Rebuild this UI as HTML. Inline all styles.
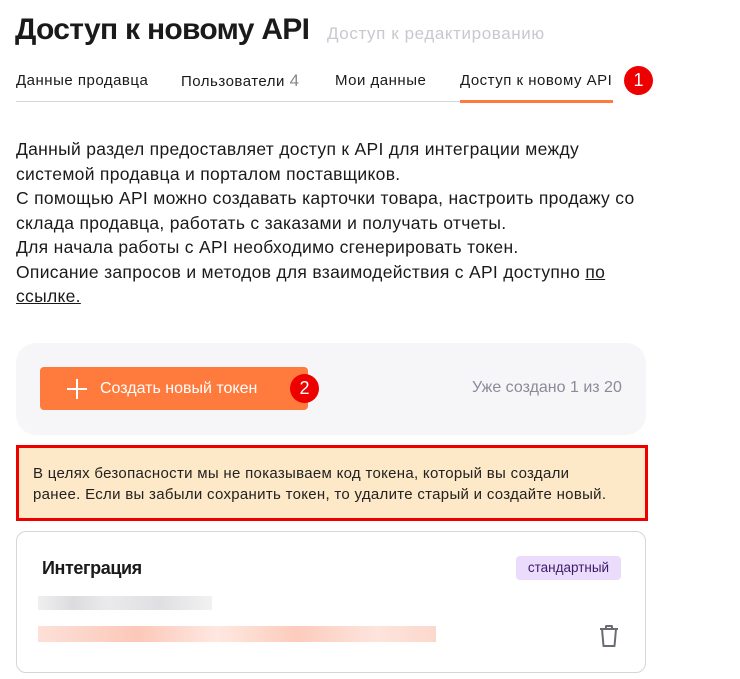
<!DOCTYPE html>
<html><head><meta charset="utf-8"><style>
*{margin:0;padding:0;box-sizing:border-box}
body{width:740px;height:679px;background:#fff;font-family:"Liberation Sans",sans-serif;color:#1a1a1a;position:relative;overflow:hidden}
.a{position:absolute;white-space:nowrap}
.badge{position:absolute;width:29px;height:29px;border-radius:50%;background:#ee0000;color:#fff;font-size:18px;text-align:center;line-height:29px}
.tab{position:absolute;top:71px;font-size:15px;letter-spacing:0.5px;line-height:20px;white-space:nowrap}
</style></head><body>
<div class="a" style="left:15px;top:13px;font-size:30px;font-weight:bold;letter-spacing:-0.7px">Доступ к новому API</div>
<div class="a" style="left:327px;top:24px;font-size:17px;color:#c8c8d0;letter-spacing:0.6px">Доступ к редактированию</div>
<div class="tab" style="left:16px">Данные продавца</div>
<div class="tab" style="left:181px">Пользователи <span style="color:#888;font-size:17px">4</span></div>
<div class="tab" style="left:335px">Мои данные</div>
<div class="tab" style="left:460px">Доступ к новому API</div>
<div class="a" style="left:16px;top:101px;width:597px;height:1px;background:#d6d6de"></div>
<div class="a" style="left:460px;top:100px;width:153px;height:3px;background:#ff7a3d"></div>
<div class="badge" style="left:624px;top:66px">1</div>
<div class="a" style="left:16px;top:137px;font-size:17.5px;line-height:24.5px;letter-spacing:0.3px;white-space:normal;width:680px">Данный раздел предоставляет доступ к API для интеграции между<br>системой продавца и порталом поставщиков.<br>С помощью API можно создавать карточки товара, настроить продажу со<br>склада продавца, работать с заказами и получать отчеты.<br>Для начала работы с API необходимо сгенерировать токен.<br>Описание запросов и методов для взаимодействия с API доступно <u>по<br>ссылке.</u></div>
<div class="a" style="left:16px;top:343px;width:630px;height:92px;border-radius:20px;background:#f6f6f8"></div>
<div class="a" style="left:40px;top:367px;width:268px;height:43px;border-radius:4px;background:#ff7a3d;color:#fff;font-size:16px;line-height:43px;padding-left:60px;letter-spacing:0px">Создать новый токен</div>
<svg class="a" style="left:65px;top:377px" width="24" height="24"><path d="M12 2V22M2 12H22" stroke="#fff" stroke-width="2"/></svg>
<div class="badge" style="left:290px;top:374px">2</div>
<div class="a" style="left:472px;top:379px;font-size:16px;color:#8a8a99;letter-spacing:0px">Уже создано 1 из 20</div>
<div class="a" style="left:16px;top:445px;width:632px;height:76px;background:#fde9c7;border:3px solid #ee0000"></div>
<div class="a" style="left:33px;top:463px;font-size:15px;line-height:21px;color:#222;letter-spacing:0.3px">В целях безопасности мы не показываем код токена, который вы создали<br>ранее. Если вы забыли сохранить токен, то удалите старый и создайте новый.</div>
<div class="a" style="left:16px;top:531px;width:630px;height:142px;border:1px solid #d5d5de;border-radius:10px"></div>
<div class="a" style="left:42px;top:558px;font-size:18px;font-weight:bold;letter-spacing:-0.4px">Интеграция</div>
<div class="a" style="left:516px;top:556px;width:105px;height:24px;border-radius:4px;background:#ecdcfc;color:#3a1a6a;font-size:13.5px;line-height:24px;text-align:center">стандартный</div>
<div class="a" style="left:38px;top:596px;width:174px;height:14px;background:linear-gradient(90deg,#eee,#d8d8dc 20%,#e8e8ea 40%,#dcdce0 70%,#f0f0f0);opacity:.9"></div>
<div class="a" style="left:38px;top:626px;width:398px;height:16px;background:linear-gradient(90deg,#fde0d8,#fcc8b8 25%,#fee8e0 45%,#fcccbc 65%,#fde4dc 85%,#fcd8cc)"></div>
<svg class="a" style="left:597px;top:623px" width="24" height="26" viewBox="0 0 24 26"><path d="M3 6H21M9 6V3.5Q9 3 9.5 3H14.5Q15 3 15 3.5V6M5 6L6.5 23H17.5L19 6" fill="none" stroke="#6b6b75" stroke-width="2" stroke-linejoin="round"/></svg>
</body></html>
